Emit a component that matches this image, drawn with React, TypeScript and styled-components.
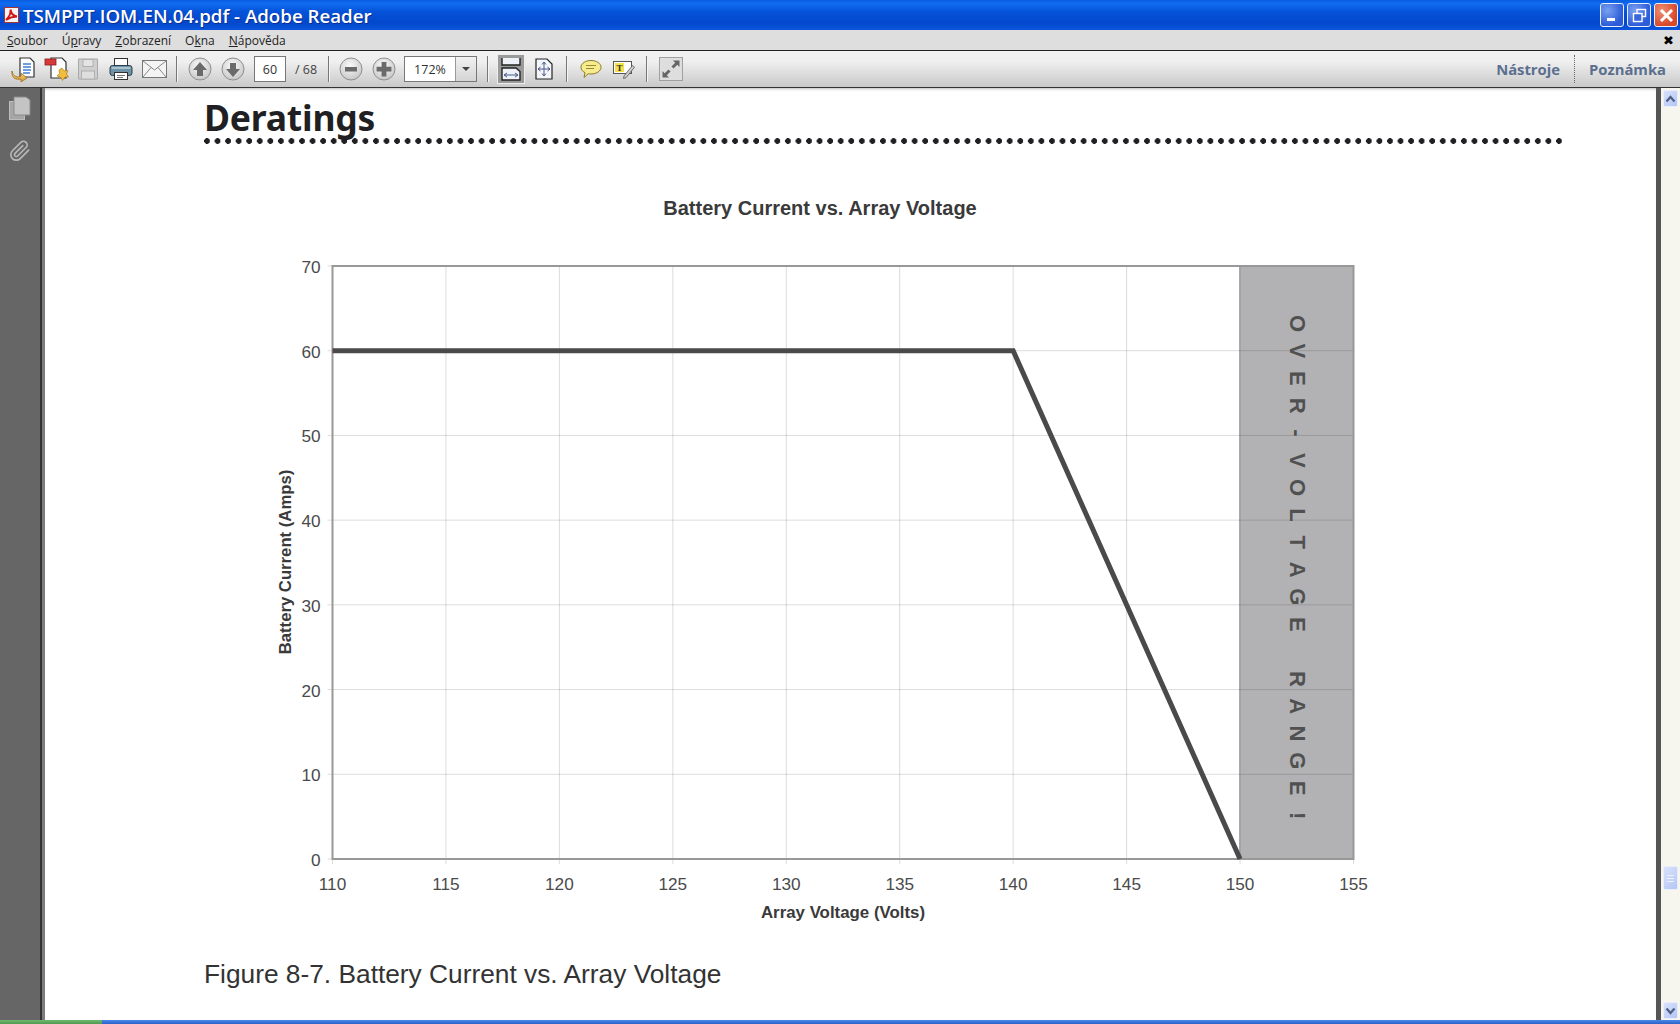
import React from "react";
import styled, { createGlobalStyle } from "styled-components";

const GlobalStyle = createGlobalStyle`
  html, body {
    margin: 0;
    padding: 0;
    height: 1024px;
    overflow: hidden;
    background: #fff;
  }
`;

const Window = styled.div`
  width: 1680px;
  height: 1024px;
  display: flex;
  flex-direction: column;
  overflow: hidden;
  font-family: "Liberation Sans", sans-serif;
`;

const TitleBar = styled.div`
  height: 30px;
  flex: none;
  display: flex;
  align-items: center;
  padding: 0 2px 0 4px;
  background: linear-gradient(#0a5ce0 0%, #0f6cf0 12%, #0552d8 40%, #0348cc 75%, #0a56dc 100%);
`;

const TitleText = styled.div`
  margin-left: 4px;
  flex: 1;
  color: #fff;
  font: 600 18.7px "Open Sans", sans-serif;
  text-shadow: 1px 1px 0 #0a2f90;
  white-space: nowrap;
`;

const WinButton = styled.div<{ $close?: boolean }>`
  width: 24px;
  height: 24px;
  margin-left: 3px;
  border: 1px solid #e8eefc;
  border-radius: 3px;
  box-sizing: border-box;
  display: flex;
  align-items: center;
  justify-content: center;
  background: ${(p) =>
    p.$close
      ? "radial-gradient(circle at 30% 30%, #ee9070, #d8482a 70%)"
      : "radial-gradient(circle at 30% 30%, #7aa0f0, #2c5cd8 70%)"};
`;

const MenuBar = styled.div`
  height: 20px;
  flex: none;
  display: flex;
  align-items: center;
  gap: 14px;
  padding: 0 6px 0 7px;
  background: #dedede;
  color: #222;
  font: 12px "Open Sans", sans-serif;
`;

const MenuItem = styled.span`
  u {
    text-decoration: underline;
  }
`;

const MenuClose = styled.span`
  margin-left: auto;
  font: bold 13px "DejaVu Sans", sans-serif;
  color: #000;
`;

const Toolbar = styled.div`
  height: 38px;
  flex: none;
  box-sizing: border-box;
  display: flex;
  align-items: center;
  border-top: 1px solid #222;
  border-bottom: 1px solid #333;
  background: linear-gradient(#f2f2f2, #efefef 30%, #c9c9c9);
  padding-left: 10px;
`;

const Tool = styled.div<{ $w: number; $after?: number; $active?: boolean }>`
  width: ${(p) => p.$w}px;
  height: 28px;
  margin-right: ${(p) => p.$after ?? 0}px;
  flex: none;
  display: flex;
  align-items: center;
  justify-content: center;
  background: ${(p) => (p.$active ? "#9a9a9a" : "transparent")};
  box-shadow: ${(p) => (p.$active ? "0 0 0 1px #eee" : "none")};
`;

const Separator = styled.div<{ $after: number }>`
  width: 1px;
  height: 26px;
  flex: none;
  margin-right: ${(p) => p.$after}px;
  background: #777;
  box-shadow: 1px 0 0 #f4f4f4;
`;

const Field = styled.div<{ $w: number; $after: number }>`
  width: ${(p) => p.$w}px;
  height: 26px;
  margin-right: ${(p) => p.$after}px;
  flex: none;
  box-sizing: border-box;
  display: flex;
  align-items: center;
  justify-content: center;
  background: #fff;
  border: 1px solid #777;
  color: #333;
  font: 12.5px "Open Sans", sans-serif;
`;

const ZoomField = styled(Field)`
  justify-content: flex-start;
`;

const ZoomValue = styled.span`
  width: 50px;
  text-align: center;
`;

const ZoomArrow = styled.span`
  height: 100%;
  flex: 1;
  box-sizing: border-box;
  display: flex;
  align-items: center;
  justify-content: center;
  border-left: 1px solid #999;
  background: linear-gradient(#f2f2f2, #d4d4d4);

  &::after {
    content: "";
    border-left: 4px solid transparent;
    border-right: 4px solid transparent;
    border-top: 4px solid #444;
  }
`;

const PageTotal = styled.span`
  width: 24px;
  margin-right: 9px;
  flex: none;
  color: #444;
  font: 12.5px "Open Sans", sans-serif;
  white-space: nowrap;
`;

const ToolLink = styled.span`
  color: #5b6f8f;
  font: bold 14.8px "Open Sans", sans-serif;
`;

const ToolLinks = styled.div`
  margin-left: auto;
  display: flex;
  align-items: center;
  height: 100%;
  padding-right: 14px;
`;

const DottedDivider = styled.div`
  height: 28px;
  margin: 0 14px 0 14px;
  border-left: 1px dotted #666;
`;

const Body = styled.div`
  flex: 1;
  min-height: 0;
  display: flex;
`;

const NavRail = styled.div`
  width: 45px;
  flex: none;
  box-sizing: border-box;
  display: flex;
  flex-direction: column;
  align-items: flex-start;
  gap: 19px;
  padding: 8px 0 0 9px;
  background: #666;
  border-right: 3px solid #7c7c7c;
  box-shadow: inset -2px 0 0 #333;
`;

const DocumentPane = styled.div`
  flex: 1;
  min-width: 0;
  background: #fff;
  padding-left: 159px;
  overflow: hidden;
  box-shadow: inset 0 3px 3px -2px #bbb;
`;

const Heading = styled.h1`
  margin: 0;
  padding-top: 9px;
  height: 40px;
  color: #1f1f24;
  font: 700 35.5px/40px "Noto Sans", sans-serif;
  letter-spacing: -0.2px;
`;

const DotRule = styled.div`
  width: 1360px;
  height: 6px;
  margin-top: 1px;
  background-image: radial-gradient(circle at 3px 3px, #1f1f24 2.6px, transparent 3.1px);
  background-size: 10.57px 6px;
  background-repeat: repeat-x;
`;

const ChartFigure = styled.svg`
  display: block;
  margin: 46px 0 0 56px;
`;

const Caption = styled.div`
  margin-top: 19px;
  color: #333;
  font: 26.3px "Liberation Sans", sans-serif;
`;

const ScrollColumn = styled.div`
  width: 24px;
  flex: none;
  display: flex;
  box-sizing: border-box;
  background: #f6f6ef;
  border-left: 5px solid #555;
`;

const ScrollTrack = styled.div`
  flex: 1;
  display: flex;
  flex-direction: column;
  align-items: center;
  padding: 2px 0 1px;
`;

const ScrollButton = styled.div<{ $h: number }>`
  width: 15px;
  height: ${(p) => p.$h}px;
  flex: none;
  box-sizing: border-box;
  display: flex;
  align-items: center;
  justify-content: center;
  background: linear-gradient(135deg, #d8e2fb, #b6c6f4);
  border: 1px solid #e8eefc;
  border-radius: 2px;
`;

const ScrollThumb = styled(ScrollButton)`
  margin-top: auto;
  margin-bottom: 112px;
`;

const Taskbar = styled.div`
  height: 4px;
  flex: none;
  display: flex;
  background: linear-gradient(#4a88e8, #2a62c8);
`;

const StartEdge = styled.div`
  width: 102px;
  background: linear-gradient(#72b872, #4f9a4f);
`;

const Chevron = ({ down }: { down?: boolean }) => (
  <svg width="11" height="8" viewBox="0 0 11 8">
    <path d={down ? "M1.5 1.5 5.5 6l4-4.5" : "M1.5 6.5 5.5 2l4 4.5"} fill="none" stroke="#4d6185" strokeWidth="2.2" />
  </svg>
);

const SharedGradients = () => (
  <svg width="0" height="0" style={{ position: "absolute" }}>
    <defs>
      <radialGradient id="roundBtn" cx="45%" cy="35%" r="70%">
        <stop offset="0" stopColor="#fafafa" />
        <stop offset="1" stopColor="#c4c4c4" />
      </radialGradient>
      <linearGradient id="yellowArrow" x1="0" y1="0" x2="0" y2="1">
        <stop offset="0" stopColor="#f6d98a" />
        <stop offset="1" stopColor="#d89a30" />
      </linearGradient>
    </defs>
  </svg>
);

const RoundIcon = ({ glyph }: { glyph: "up" | "down" | "minus" | "plus" }) => {
  const shapes = {
    up: "M12 5 19 13H15V19H9V13H5Z",
    down: "M12 20 5 12H9V6H15V12H19Z",
    minus: "M6 10H18V14.5H6Z",
    plus: "M9.6 5H14.4V9.8H19.4V14.4H14.4V19.4H9.6V14.4H4.6V9.8H9.6Z",
  };
  return (
    <svg width="24" height="24" viewBox="0 0 24 24">
      <circle cx="12" cy="12" r="11" fill="url(#roundBtn)" stroke="#8f8f8f" />
      <path d={shapes[glyph]} fill="#6a6a6a" />
    </svg>
  );
};

const OpenIcon = () => (
  <svg width="26" height="26" viewBox="0 0 26 26">
    <path d="M10 2H20L24 6V21H10Z" fill="#fff" stroke="#333" strokeWidth="1.2" />
    <path d="M13 8H21M13 11H21M13 14H21M13 17H20" stroke="#3f7fd0" strokeWidth="1.3" />
    <path d="M2 15C3 21 8 22 11 20V17L17 22 11 26V23C6 24 1 22 2 15Z" fill="url(#yellowArrow)" stroke="#9a6a18" strokeWidth=".8" />
  </svg>
);

const CreateIcon = () => (
  <svg width="26" height="26" viewBox="0 0 26 26">
    <path d="M7 2H18L22 6V22H7Z" fill="#fff" stroke="#333" strokeWidth="1.2" />
    <rect x="1" y="3" width="11" height="6" fill="#d83a3a" stroke="#8a1c1c" strokeWidth=".8" />
    <path d="M18 12 20 15 24 14.5 22.5 18 24.5 21 21 21 18.5 24.5 16.5 21 13 20 15.5 17.5 15 14Z" fill="#f2bd3c" stroke="#b5801a" strokeWidth=".7" />
  </svg>
);

const SaveIcon = () => (
  <svg width="22" height="24" viewBox="0 0 22 24">
    <path d="M1.5 2H20.5V22H1.5Z" fill="#cfcfcf" stroke="#a9a9a9" />
    <rect x="6" y="2.5" width="10" height="7" fill="#e4e4e4" stroke="#b0b0b0" />
    <rect x="4.5" y="14" width="13" height="8" fill="#dedede" stroke="#b0b0b0" />
  </svg>
);

const PrintIcon = () => (
  <svg width="24" height="24" viewBox="0 0 24 24">
    <rect x="5.5" y="1.5" width="13" height="8" fill="#fff" stroke="#333" />
    <rect x="1" y="8.5" width="22" height="10" rx="2.5" fill="#6f92a6" stroke="#2d3f4a" />
    <rect x="2.5" y="10" width="19" height="2" fill="#a9c2d0" />
    <rect x="5.5" y="15.5" width="13" height="7" fill="#fff" stroke="#333" />
    <path d="M8 18.5H16M8 20.5H14" stroke="#777" />
  </svg>
);

const MailIcon = () => (
  <svg width="25" height="18" viewBox="0 0 25 18">
    <rect x=".5" y=".5" width="24" height="17" fill="#f4f4f4" stroke="#777" />
    <path d="M1 1 12.5 10 24 1M1 17 9 7.5M24 17 16 7.5" fill="none" stroke="#888" />
  </svg>
);

const FitWidthIcon = () => (
  <svg width="22" height="24" viewBox="0 0 22 24">
    <path d="M2 1V8H20V1" fill="#eef1f8" stroke="#222" strokeWidth="1.4" />
    <path d="M2 23V11H16L20 14.5V23Z" fill="#eef1f8" stroke="#222" strokeWidth="1.4" />
    <path d="M4 18H18M4 18l3-2M4 18l3 2M18 18l-3-2M18 18l-3 2" fill="none" stroke="#47598a" />
  </svg>
);

const FitPageIcon = () => (
  <svg width="18" height="22" viewBox="0 0 18 22">
    <path d="M1 1H12L17 6V21H1Z" fill="#f4f6fb" stroke="#222" strokeWidth="1.2" />
    <path d="M9 4V18M3 11H15M9 4 7 6.5M9 4l2 2.5M9 18l-2-2.5M9 18l2-2.5M3 11l2.5-2M3 11l2.5 2M15 11l-2.5-2M15 11l-2.5 2" fill="none" stroke="#47598a" />
  </svg>
);

const CommentIcon = () => (
  <svg width="22" height="20" viewBox="0 0 22 20">
    <path d="M11 1.5C16.5 1.5 21 4.4 21 8.2S16.5 15 11 15C10 15 9 14.9 8.2 14.7L4 18.5 5 13.6C2.5 12.5 1 10.5 1 8.2 1 4.4 5.5 1.5 11 1.5Z" fill="#f6ec8e" stroke="#8a7a28" />
    <path d="M6 6.5H16M6 9.5H14" stroke="#9a8a30" />
  </svg>
);

const NoteIcon = () => (
  <svg width="22" height="20" viewBox="0 0 22 20">
    <rect x=".5" y="2.5" width="18" height="12" fill="#fff" stroke="#555" />
    <rect x="2" y="4" width="9" height="9" fill="#f6e04a" />
    <text x="6.5" y="11.5" textAnchor="middle" fontSize="9" fontWeight="bold" fontFamily="Liberation Serif, serif" fill="#333">T</text>
    <path d="M11 17 19.5 6.5 21.5 8.2 13 18.7 10.5 19.5Z" fill="#d0d0d0" stroke="#555" strokeWidth=".8" />
  </svg>
);

const FullScreenIcon = () => (
  <svg width="24" height="24" viewBox="0 0 24 24">
    <rect x=".5" y=".5" width="23" height="23" fill="#dedede" stroke="#a0a0a0" />
    <path d="M14 3.5H20.5V10L18.3 7.8 14.5 11.5 12.5 9.5 16.2 5.7Z" fill="#666" />
    <path d="M10 20.5H3.5V14L5.7 16.2 9.5 12.5 11.5 14.5 7.8 18.3Z" fill="#666" />
  </svg>
);

const PagesIcon = () => (
  <svg width="22" height="24" viewBox="0 0 22 24">
    <rect x=".5" y="5.5" width="15" height="18" fill="#a6a6a6" stroke="#bcbcbc" />
    <path d="M5 1H17L21 4V19H5Z" fill="#c4c4c4" stroke="#8a8a8a" />
  </svg>
);

const ClipIcon = () => (
  <svg width="22" height="24" viewBox="0 0 24 24" fill="none" stroke="#b8b8b8" strokeWidth="1.8" strokeLinecap="round" strokeLinejoin="round">
    <path d="M21.44 11.05 12.25 20.24a6 6 0 0 1-8.49-8.49l9.19-9.19a4 4 0 0 1 5.66 5.66l-9.2 9.19a2 2 0 0 1-2.83-2.83l8.49-8.48" />
  </svg>
);

const PdfIcon = () => (
  <svg width="15" height="16" viewBox="0 0 15 16">
    <rect x="0.5" y="0.5" width="14" height="15" fill="#f4f4f4" stroke="#a33" />
    <path d="M2 13C5 10 7 6 6.5 2.5 7 6 9 9 13 9.5 9 9.5 5 11 2 13Z" fill="none" stroke="#d01818" strokeWidth="2" />
  </svg>
);

// chart geometry in page pixels, the svg viewBox starts at the same origin
const PLOT = { left: 332.5, right: 1353.5, top: 266, bottom: 859 };
const xTicks = [110, 115, 120, 125, 130, 135, 140, 145, 150, 155];
const yTicks = [0, 10, 20, 30, 40, 50, 60, 70];
const xPos = (v: number) => PLOT.left + ((v - 110) / 45) * (PLOT.right - PLOT.left);
const yPos = (v: number) => PLOT.bottom - (v / 70) * (PLOT.bottom - PLOT.top);
const bandText = "OVER-VOLTAGE RANGE!".split("");

const Chart = () => (
  <ChartFigure width="1130" height="750" viewBox="260 190 1130 750" fontFamily="Liberation Sans, sans-serif">
    <text x="820" y="215" textAnchor="middle" fontSize="20" fontWeight="bold" fill="#3a3a3a">
      Battery Current vs. Array Voltage
    </text>
    <rect x={xPos(150) - 1} y={PLOT.top} width={PLOT.right - xPos(150) + 1} height={PLOT.bottom - PLOT.top} fill="#b2b2b4" />
    {xTicks.map((v) => (
      <g key={v}>
        <line x1={xPos(v)} x2={xPos(v)} y1={PLOT.top} y2={PLOT.bottom + 5} stroke="#000" strokeOpacity=".14" />
        <text x={xPos(v)} y="890" textAnchor="middle" fontSize="17.2" fill="#4a4a4a">{v}</text>
      </g>
    ))}
    {yTicks.map((v) => (
      <g key={v}>
        <line x1={PLOT.left - 5} x2={PLOT.right} y1={yPos(v)} y2={yPos(v)} stroke="#000" strokeOpacity=".14" />
        <text x="320.5" y={yPos(v) + 7} textAnchor="end" fontSize="17.2" fill="#4a4a4a">{v}</text>
      </g>
    ))}
    {bandText.map((ch, i) => (
      <text
        key={i}
        transform={`translate(1297 ${323.6 + i * 27.33}) rotate(90)`}
        textAnchor="middle"
        dominantBaseline="central"
        fontSize="22"
        fontWeight="bold"
        fill="#505050"
      >
        {ch}
      </text>
    ))}
    <rect x={PLOT.left} y={PLOT.top} width={PLOT.right - PLOT.left} height={PLOT.bottom - PLOT.top} fill="none" stroke="#989898" strokeWidth="2" />
    <path
      d={`M${PLOT.left} ${yPos(60)}H${xPos(140)}L${xPos(150)} ${PLOT.bottom}`}
      fill="none"
      stroke="#4a4a4a"
      strokeWidth="5"
    />
    <text x="843" y="918" textAnchor="middle" fontSize="16.85" fontWeight="bold" fill="#3a3a3a">
      Array Voltage (Volts)
    </text>
    <text transform="translate(291 562) rotate(-90)" textAnchor="middle" fontSize="16.7" fontWeight="bold" fill="#3a3a3a">
      Battery Current (Amps)
    </text>
  </ChartFigure>
);

export default function App() {
  return (
    <Window>
      <GlobalStyle />
      <SharedGradients />
      <TitleBar>
        <PdfIcon />
        <TitleText>TSMPPT.IOM.EN.04.pdf - Adobe Reader</TitleText>
        <WinButton>
          <svg width="13" height="13" viewBox="0 0 13 13"><rect x="1" y="9" width="8" height="3" fill="#fff" /></svg>
        </WinButton>
        <WinButton>
          <svg width="15" height="15" viewBox="0 0 15 15" fill="none" stroke="#fff" strokeWidth="1.4">
            <rect x="5" y="1.5" width="8.5" height="7" />
            <rect x="1.5" y="5.5" width="8.5" height="8" fill="#3a66dc" />
          </svg>
        </WinButton>
        <WinButton $close>
          <svg width="15" height="15" viewBox="0 0 15 15"><path d="M2 2 13 13M13 2 2 13" stroke="#fff" strokeWidth="3" /></svg>
        </WinButton>
      </TitleBar>
      <MenuBar>
        <MenuItem><u>S</u>oubor</MenuItem>
        <MenuItem>Ú<u>p</u>ravy</MenuItem>
        <MenuItem><u>Z</u>obrazení</MenuItem>
        <MenuItem>O<u>k</u>na</MenuItem>
        <MenuItem><u>N</u>ápověda</MenuItem>
        <MenuClose>✖</MenuClose>
      </MenuBar>
      <Toolbar>
        <Tool $w={26} $after={8}><OpenIcon /></Tool>
        <Tool $w={26} $after={7}><CreateIcon /></Tool>
        <Tool $w={22} $after={10}><SaveIcon /></Tool>
        <Tool $w={24} $after={8}><PrintIcon /></Tool>
        <Tool $w={26} $after={9}><MailIcon /></Tool>
        <Separator $after={11} />
        <Tool $w={24} $after={9}><RoundIcon glyph="up" /></Tool>
        <Tool $w={24} $after={9}><RoundIcon glyph="down" /></Tool>
        <Field $w={32} $after={9}>60</Field>
        <PageTotal>/ 68</PageTotal>
        <Separator $after={10} />
        <Tool $w={24} $after={9}><RoundIcon glyph="minus" /></Tool>
        <Tool $w={24} $after={8}><RoundIcon glyph="plus" /></Tool>
        <ZoomField $w={73} $after={10}>
          <ZoomValue>172%</ZoomValue>
          <ZoomArrow />
        </ZoomField>
        <Separator $after={10} />
        <Tool $w={26} $after={10} $active><FitWidthIcon /></Tool>
        <Tool $w={20} $after={12}><FitPageIcon /></Tool>
        <Separator $after={13} />
        <Tool $w={22} $after={11}><CommentIcon /></Tool>
        <Tool $w={22} $after={11}><NoteIcon /></Tool>
        <Separator $after={12} />
        <Tool $w={24}><FullScreenIcon /></Tool>
        <ToolLinks>
          <ToolLink>Nástroje</ToolLink>
          <DottedDivider />
          <ToolLink>Poznámka</ToolLink>
        </ToolLinks>
      </Toolbar>
      <Body>
        <NavRail>
          <PagesIcon />
          <ClipIcon />
        </NavRail>
        <DocumentPane>
          <Heading>Deratings</Heading>
          <DotRule />
          <Chart />
          <Caption>Figure 8-7. Battery Current vs. Array Voltage</Caption>
        </DocumentPane>
        <ScrollColumn>
          <ScrollTrack>
            <ScrollButton $h={17}><Chevron /></ScrollButton>
            <ScrollThumb $h={24}>
              <svg width="9" height="9" viewBox="0 0 9 9"><path d="M1 1.5H8M1 4.5H8M1 7.5H8" stroke="#eef2fe" strokeWidth="1.2" /></svg>
            </ScrollThumb>
            <ScrollButton $h={17}><Chevron down /></ScrollButton>
          </ScrollTrack>
        </ScrollColumn>
      </Body>
      <Taskbar>
        <StartEdge />
      </Taskbar>
    </Window>
  );
}
